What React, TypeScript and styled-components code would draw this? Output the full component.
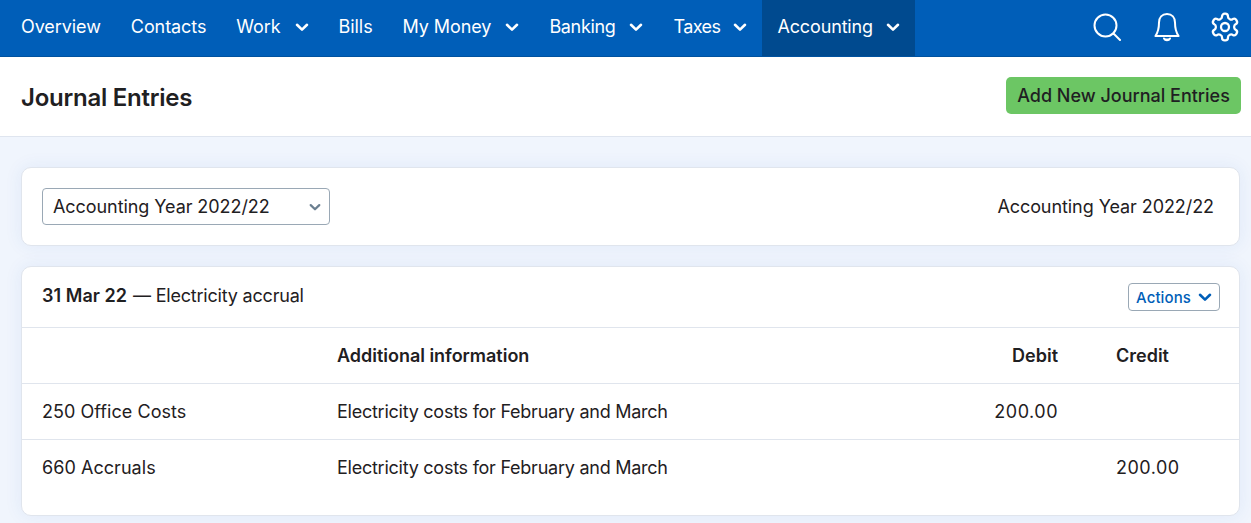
import React from 'react';
import styled, { createGlobalStyle } from 'styled-components';

const GlobalStyle = createGlobalStyle`
  html, body {
    margin: 0;
    padding: 0;
    height: 523px;
    overflow: hidden;
    background: #f0f5fd;
    font-family: "Inter", "Liberation Sans", sans-serif;
    color: #1f2022;
  }
  * { box-sizing: border-box; }
`;

const NavBar = styled.nav`
  display: flex;
  justify-content: space-between;
  height: 57px;
  padding: 0 6px;
  background: #005eb8;
  border-bottom: 1px solid #00529f;
`;

const NavList = styled.div`
  display: flex;
`;

const NavItem = styled.a<{ $active?: boolean; $spacing?: number; $gap?: number }>`
  display: flex;
  align-items: center;
  gap: ${(p) => p.$gap ?? 14}px;
  height: 56px;
  padding: 0 15px 3px;
  font-size: 18px;
  letter-spacing: ${(p) => p.$spacing ?? -0.08}px;
  color: #fff;
  background: ${(p) => (p.$active ? '#004a8f' : 'transparent')};
`;

const NavIcons = styled.div`
  display: flex;
  align-items: center;
  gap: 28px;
  padding: 0 4px 2px 0;
`;

const PageHeader = styled.header`
  display: flex;
  justify-content: space-between;
  align-items: center;
  height: 80px;
  padding: 0 10px 0 21px;
  background: #fff;
  border-bottom: 1px solid #dfe5ef;
`;

const Title = styled.h1`
  margin: 0;
  padding-top: 2px;
  font-size: 24px;
  font-weight: 600;
  letter-spacing: -0.25px;
`;

const AddButton = styled.button`
  height: 37px;
  width: 235px;
  margin-bottom: 3px;
  padding: 0;
  border: 0;
  border-radius: 5px;
  background: #6cc664;
  font: 500 18px "Inter", "Liberation Sans", sans-serif;
  color: #1f2022;
`;

const Content = styled.main`
  display: flex;
  flex-direction: column;
  gap: 20px;
  padding: 30px 11px 0 21px;
`;

const Card = styled.section`
  background: #fff;
  border: 1px solid #e0e5ed;
  border-radius: 10px;
  box-shadow: 0 0 18px rgba(40, 90, 190, 0.08);
`;

const YearCard = styled(Card)`
  display: flex;
  justify-content: space-between;
  align-items: center;
  height: 79px;
  padding: 0 25px 0 20px;
`;

const YearSelect = styled.div`
  display: flex;
  justify-content: space-between;
  align-items: center;
  width: 288px;
  height: 37px;
  padding: 0 8px 0 10px;
  border: 1px solid #9aa8b5;
  border-radius: 4px;
  font-size: 18px;
  letter-spacing: -0.07px;
`;

const YearLabel = styled.div`
  font-size: 18px;
  letter-spacing: -0.07px;
`;

const EntryCard = styled(Card)`
  height: 250px;
`;

const EntryHeader = styled.div`
  display: flex;
  justify-content: space-between;
  align-items: center;
  height: 61px;
  padding: 0 19px 0 20px;
  border-bottom: 1px solid #e0e5ed;
  font-size: 18px;
  letter-spacing: -0.2px;
`;

const EntryTitle = styled.div`
  margin-top: -4px;
`;

const EntryDate = styled.strong`
  margin-right: 1px;
  font-weight: 600;
  letter-spacing: 0.05px;
`;

const ActionsButton = styled.button`
  display: flex;
  align-items: center;
  justify-content: center;
  gap: 7px;
  width: 92px;
  height: 28px;
  padding: 0;
  border: 1px solid #9aa8b5;
  border-radius: 4px;
  background: #fff;
  font: 500 15px "Inter", "Liberation Sans", sans-serif;
  letter-spacing: 0.1px;
  color: #005eb8;
`;

const Row = styled.div<{ $head?: boolean }>`
  display: grid;
  grid-template-columns: 295px 631px 90px 181px;
  align-items: center;
  height: ${(p) => (p.$head ? '56px' : '55px')};
  padding-left: 20px;
  font-size: 18px;
  font-weight: ${(p) => (p.$head ? 600 : 400)};
  border-bottom: ${(p) => (p.$head ? '1px solid #e0e5ed' : '0')};
`;

const RowLine = styled.div`
  height: 1px;
  background: #e0e5ed;
`;

const AccountCell = styled.div`
  letter-spacing: 0.05px;
`;

const InfoCell = styled.div<{ $head?: boolean }>`
  letter-spacing: ${(p) => (p.$head ? '-0.02px' : '-0.25px')};
`;

const Debit = styled.div<{ $amount?: boolean }>`
  text-align: right;
  letter-spacing: ${(p) => (p.$amount ? '0.5px' : '0')};
`;

const Credit = styled.div<{ $amount?: boolean }>`
  padding-left: 58px;
  white-space: nowrap;
  letter-spacing: ${(p) => (p.$amount ? '0.5px' : '0')};
`;

function Chevron({ size = 14, color = '#fff', width = 2.6 }: { size?: number; color?: string; width?: number }) {
  return (
    <svg width={size} height={size} viewBox="0 0 14 14" fill="none">
      <path d="M2 4.8 7 9.6l5-4.8" stroke={color} strokeWidth={width} strokeLinecap="round" strokeLinejoin="round" />
    </svg>
  );
}

const SearchIcon = () => (
  <svg width="32" height="28" viewBox="0 0 32 28" fill="none" stroke="#fff" strokeWidth="2" strokeLinecap="round">
    <circle cx="12.5" cy="12.5" r="11" />
    <path d="M20.500 20.500l6.500 6.500" />
  </svg>
);

const BellIcon = () => (
  <svg width="28" height="30" viewBox="0 0 28 30" fill="none" stroke="#fff" strokeWidth="2" strokeLinejoin="round" strokeLinecap="round">
    <path d="M14 2c-5 0-8 3.600-8 8.600 0 7-1.200 10.200-3.600 13.400h23.200C23.200 20.800 22 17.600 22 10.600 22 5.600 19 2 14 2z" />
    <path d="M11 26.500c.6 1.200 1.700 1.800 3 1.800s2.400-.6 3-1.800" fill="#fff" />
  </svg>
);

const GearIcon = () => (
  <svg width="32" height="32" viewBox="0 0 24 24" fill="none" stroke="#fff" strokeWidth="1.700" strokeLinecap="round" strokeLinejoin="round">
    <path d="M12.220 2h-.44a2 2 0 0 0-2 2v.18a2 2 0 0 1-1 1.730l-.43.250a2 2 0 0 1-2 0l-.150-.080a2 2 0 0 0-2.730.730l-.220.380a2 2 0 0 0 .730 2.730l.150.100a2 2 0 0 1 1 1.720v.510a2 2 0 0 1-1 1.740l-.150.090a2 2 0 0 0-.730 2.730l.220.380a2 2 0 0 0 2.730.730l.150-.080a2 2 0 0 1 2 0l.430.250a2 2 0 0 1 1 1.730V20a2 2 0 0 0 2 2h.44a2 2 0 0 0 2-2v-.18a2 2 0 0 1 1-1.730l.430-.250a2 2 0 0 1 2 0l.150.080a2 2 0 0 0 2.730-.730l.220-.390a2 2 0 0 0-.730-2.730l-.150-.080a2 2 0 0 1-1-1.740v-.500a2 2 0 0 1 1-1.740l.150-.090a2 2 0 0 0 .730-2.730l-.220-.380a2 2 0 0 0-2.730-.730l-.150.080a2 2 0 0 1-2 0l-.430-.250a2 2 0 0 1-1-1.730V4a2 2 0 0 0-2-2z" />
    <circle cx="12" cy="12" r="3" />
  </svg>
);

const navItems = [
  { label: 'Overview' },
  { label: 'Contacts' },
  { label: 'Work', menu: true },
  { label: 'Bills' },
  { label: 'My Money', menu: true },
  { label: 'Banking', menu: true, spacing: -0.35 },
  { label: 'Taxes', menu: true, spacing: -0.55, gap: 13 },
  { label: 'Accounting', menu: true, active: true, spacing: -0.15, gap: 13 },
];

export default function App() {
  return (
    <>
      <GlobalStyle />
      <NavBar>
        <NavList>
          {navItems.map((item) => (
            <NavItem key={item.label} $active={item.active} $spacing={item.spacing} $gap={item.gap}>
              {item.label}
              {item.menu && <Chevron />}
            </NavItem>
          ))}
        </NavList>
        <NavIcons>
          <SearchIcon />
          <BellIcon />
          <GearIcon />
        </NavIcons>
      </NavBar>
      <PageHeader>
        <Title>Journal Entries</Title>
        <AddButton>Add New Journal Entries</AddButton>
      </PageHeader>
      <Content>
        <YearCard>
          <YearSelect>
            Accounting Year 2022/22
            <Chevron size={12} color="#6b7f90" />
          </YearSelect>
          <YearLabel>Accounting Year 2022/22</YearLabel>
        </YearCard>
        <EntryCard>
          <EntryHeader>
            <EntryTitle>
              <EntryDate>31 Mar 22</EntryDate> — Electricity accrual
            </EntryTitle>
            <ActionsButton>
              Actions
              <Chevron size={14} color="#005eb8" />
            </ActionsButton>
          </EntryHeader>
          <Row $head>
            <div />
            <InfoCell $head>Additional information</InfoCell>
            <Debit>Debit</Debit>
            <Credit>Credit</Credit>
          </Row>
          <Row>
            <AccountCell>250 Office Costs</AccountCell>
            <InfoCell>Electricity costs for February and March</InfoCell>
            <Debit $amount>200.00</Debit>
            <Credit />
          </Row>
          <RowLine />
          <Row>
            <AccountCell>660 Accruals</AccountCell>
            <InfoCell>Electricity costs for February and March</InfoCell>
            <Debit />
            <Credit $amount>200.00</Credit>
          </Row>
        </EntryCard>
      </Content>
    </>
  );
}
